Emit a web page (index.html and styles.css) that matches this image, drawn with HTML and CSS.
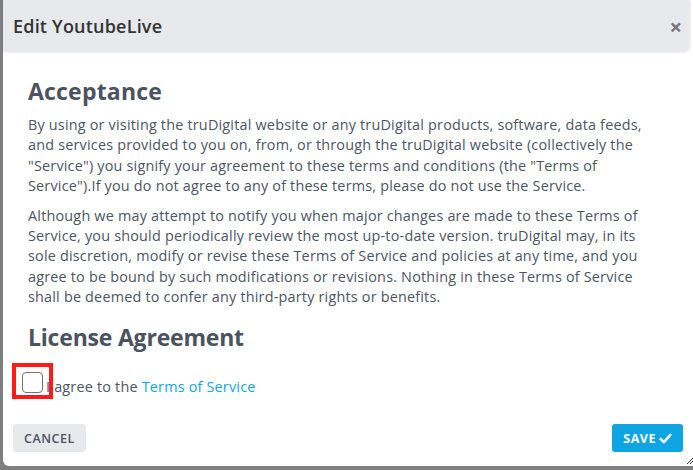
FILE: index.html
```html
<!DOCTYPE html>
<html>
<head>
<meta charset="utf-8">
<link rel="stylesheet" href="styles.css">
</head>
<body>
<div class="backdrop">
  <div class="dialog">
    <div class="header">
      <h1 class="title">Edit YoutubeLive</h1>
      <span class="close">×</span>
    </div>
    <div class="content">
      <h2 class="heading">Acceptance</h2>
      <p class="para">By using or visiting the truDigital website or any truDigital products, software, data feeds,<br>and services provided to you on, from, or through the truDigital website (collectively the<br>"Service") you signify your agreement to these terms and conditions (the "Terms of<br>Service").If you do not agree to any of these terms, please do not use the Service.</p>
      <p class="para">Although we may attempt to notify you when major changes are made to these Terms of<br>Service, you should periodically review the most up-to-date version. truDigital may, in its<br>sole discretion, modify or revise these Terms of Service and policies at any time, and you<br>agree to be bound by such modifications or revisions. Nothing in these Terms of Service<br>shall be deemed to confer any third-party rights or benefits.</p>
      <h2 class="heading heading-license">License Agreement</h2>
      <div class="agree">
        <span class="checkbox"></span>
        <span class="agree-text">I agree to the <a class="link">Terms of Service</a></span>
        <span class="highlight"></span>
      </div>
    </div>
    <div class="footer">
      <button class="btn btn-cancel">CANCEL</button>
      <button class="btn btn-save">SAVE <svg class="check-icon" viewBox="0 0 16 16" width="13" height="13"><path d="M2 8.5 L6 12.5 L14 3.5" fill="none" stroke="#fff" stroke-width="3" stroke-linecap="round" stroke-linejoin="round"/></svg></button>
    </div>
    <svg class="grip" viewBox="0 0 10 10" width="10" height="10"><path d="M9 2 L2 9 M9 5 L5 9 M9 8 L8 9" stroke="#333" stroke-width="1"/></svg>
  </div>
</div>
</body>
</html>
```

FILE: styles.css
```css
html, body {
  margin: 0;
  padding: 0;
}
body {
  width: 693px;
  height: 470px;
  overflow: hidden;
  background: #7f7f7f;
  font-family: "Open Sans", "Liberation Sans", sans-serif;
}
.backdrop {
  padding: 0 0 4px 3px;
  height: 466px;
}
.dialog {
  position: relative;
  background: #fff;
  height: 466px;
  width: 700px;
  border-radius: 0 0 0 6px;
  display: flex;
  flex-direction: column;
}
.header {
  background: #e7e9ed;
  height: 51px;
  display: flex;
  align-items: center;
  justify-content: space-between;
  box-shadow: 0 1px 3px rgba(0,0,0,0.12);
  padding: 0 0 0 10px;
  width: 687px;
  box-sizing: border-box;
  border-radius: 0 0 6px 0;
}
.title {
  margin: 0;
  font-size: 18px;
  font-weight: 600;
  color: #333;
  letter-spacing: 0.2px;
}
.close {
  font-size: 22px;
  font-weight: 700;
  color: #777;
  margin-right: 8px;
  line-height: 1;
}
.content {
  padding: 25px 0 0 25px;
  color: #4b5563;
}
.heading {
  margin: 0;
  font-size: 23px;
  font-weight: 700;
  color: #4b5260;
  line-height: 30px;
  letter-spacing: 0.2px;
}
.para {
  margin: 9px 0 8px;
  font-size: 14.4px;
  line-height: 20.4px;
  letter-spacing: 0.2px;
  white-space: nowrap;
}
.heading-license {
  margin-top: 14px;
  letter-spacing: -0.2px;
}
.agree {
  position: relative;
  display: flex;
  align-items: center;
  margin: 20px 0 0 -6px;
  font-size: 14.4px;
  letter-spacing: 0.2px;
}
.checkbox {
  width: 21px;
  height: 21px;
  border: 1px solid #6b7280;
  border-radius: 4px;
  box-sizing: border-box;
  background: #fff;
  margin-right: 3px;
  margin-bottom: 6px;
}
.agree-text {
  padding-top: 3px;
}
.highlight {
  position: absolute;
  left: -10px;
  top: -9px;
  width: 41px;
  height: 36px;
  border: 4px solid #ff1a1a;
  box-sizing: border-box;
}
.link {
  color: #0ea5e9;
}
.footer {
  margin-top: auto;
  display: flex;
  justify-content: space-between;
  padding: 0 0 14px 10px;
  width: 680px;
  box-sizing: border-box;
}
.btn {
  border: none;
  border-radius: 3px;
  height: 28px;
  font-family: "Open Sans", "Liberation Sans", sans-serif;
  font-size: 12.5px;
  font-weight: 600;
  letter-spacing: 0.5px;
  display: flex;
  align-items: center;
  padding: 0 11px;
}
.btn-cancel {
  background: #e7e9ed;
  color: #4b5563;
}
.btn-save {
  background: #0ea5e2;
  color: #fff;
  font-weight: 700;
  gap: 3px;
}
.grip {
  position: absolute;
  left: 682px;
  bottom: 1px;
}
```
